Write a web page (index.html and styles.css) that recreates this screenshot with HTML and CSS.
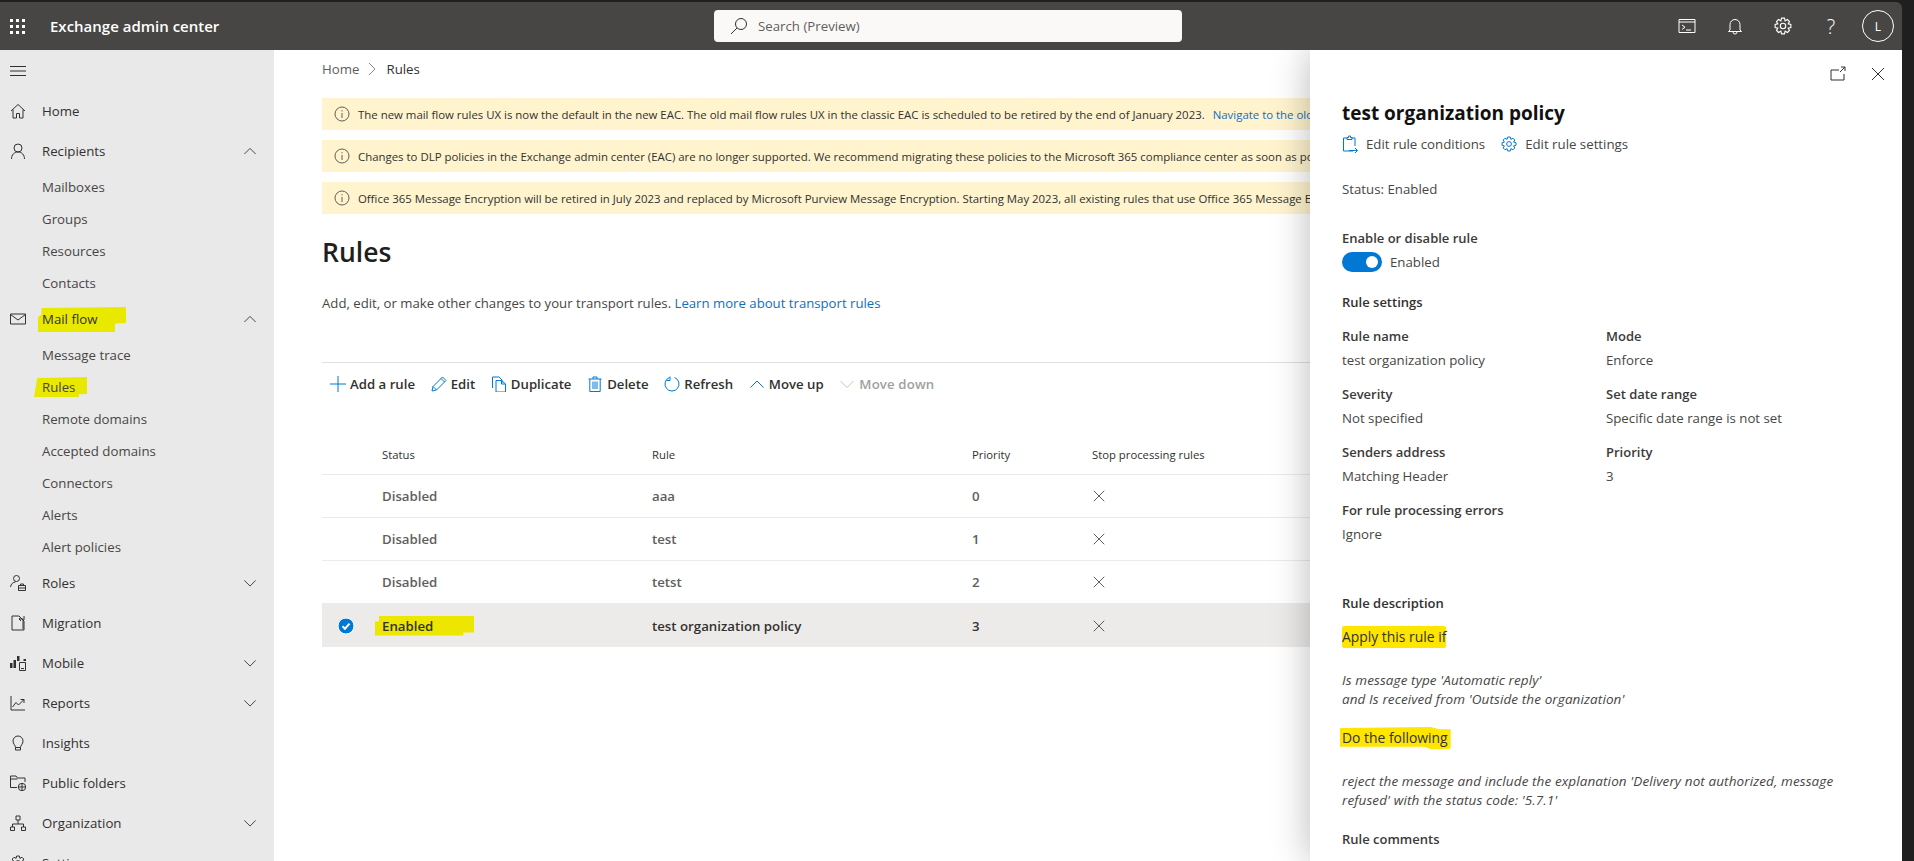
FILE: index.html
```html
<!DOCTYPE html>
<html lang="en">
<head>
<meta charset="utf-8">
<title>Rules - Exchange admin center</title>
<link rel="stylesheet" href="styles.css">
</head>
<body>
<svg class="sprite" aria-hidden="true">
  <symbol id="i-gear" viewBox="0 0 16 16"><path d="M6.7 1h2.6l.6 2.4 2.06-1.17 1.81 1.81L12.6 6.1l2.4.6v2.6l-2.4.6 1.17 2.06-1.81 1.81L9.9 12.6l-.6 2.4H6.7l-.6-2.4-2.06 1.17-1.81-1.81L3.4 9.9 1 9.3V6.7l2.4-.6-1.17-2.06 1.81-1.81L6.1 3.4z"/><circle cx="8" cy="8" r="2.4"/></symbol>
  <symbol id="i-up" viewBox="0 0 16 16"><path d="M1.5 11.5 8 5l6.5 6.5"/></symbol>
  <symbol id="i-down" viewBox="0 0 16 16"><path d="M1.5 5 8 11.5 14.5 5"/></symbol>
  <symbol id="i-info" viewBox="0 0 16 16"><circle cx="8" cy="8" r="7"/><path d="M8 7v5M8 4.2v1.2"/></symbol>
  <symbol id="i-x" viewBox="0 0 16 16"><path d="M2 2l12 12M14 2 2 14"/></symbol>
</svg>

<div class="app">
  <header class="topbar">
    <svg class="waffle" viewBox="0 0 15 15"><path d="M0 0h3v3H0zM6 0h3v3H6zM12 0h3v3h-3zM0 6h3v3H0zM6 6h3v3H6zM12 6h3v3h-3zM0 12h3v3H0zM6 12h3v3H6zM12 12h3v3h-3z"/></svg>
    <div class="brand">Exchange admin center</div>
    <div class="search">
      <svg class="ico search-ico" viewBox="0 0 18 18"><circle cx="11" cy="7" r="5.5"/><path d="M7 11 1 17"/></svg>
      <span>Search (Preview)</span>
    </div>
    <div class="top-actions">
      <svg class="ico top-ico" viewBox="0 0 18 18"><path d="M1 2.5h16v13H1zM1 5h16M4 8l3 2.2L4 12.400M8 13h5"/></svg>
      <svg class="ico top-ico" viewBox="0 0 18 18"><path d="M4 13V7.500a5 5 0 0 1 10 0V13l1.500 1.500h-13zM7 15a2 2 0 0 0 4 0"/></svg>
      <svg class="ico top-ico"><use href="#i-gear"/></svg>
      <span class="help">?</span>
      <span class="avatar">L</span>
    </div>
  </header>

  <div class="body">
    <nav class="side">
      <div class="nav-toggle">
        <svg class="ico nav-ico" viewBox="0 0 16 16"><path d="M0 3.500h16M0 8h16M0 12.500h16"/></svg>
      </div>
      <a class="nav-item">
        <svg class="ico nav-ico" viewBox="0 0 16 16"><path d="M1 8 8 1.500 15 8M3 6.500V15h3.500v-4.500h3V15H13V6.500"/></svg>
        <span>Home</span>
      </a>
      <a class="nav-item">
        <svg class="ico nav-ico" viewBox="0 0 16 16"><circle cx="8" cy="5" r="4"/><path d="M1.500 16c0-4 2.500-7 6.500-7s6.500 3 6.500 7"/></svg>
        <span>Recipients</span>
        <svg class="ico chev"><use href="#i-up"/></svg>
      </a>
      <a class="nav-sub">Mailboxes</a>
      <a class="nav-sub">Groups</a>
      <a class="nav-sub">Resources</a>
      <a class="nav-sub">Contacts</a>
      <a class="nav-item">
        <svg class="ico nav-ico" viewBox="0 0 16 16"><path d="M.5 3h15v10H.500zM.5 3.500 8 9l7.500-5.500"/></svg>
        <span class="mark mark-mail">Mail flow</span>
        <svg class="ico chev"><use href="#i-up"/></svg>
      </a>
      <a class="nav-sub">Message trace</a>
      <a class="nav-sub"><span class="mark mark-rules">Rules</span></a>
      <a class="nav-sub">Remote domains</a>
      <a class="nav-sub">Accepted domains</a>
      <a class="nav-sub">Connectors</a>
      <a class="nav-sub">Alerts</a>
      <a class="nav-sub">Alert policies</a>
      <a class="nav-item">
        <svg class="ico nav-ico" viewBox="0 0 16 16"><circle cx="6.500" cy="3.500" r="3"/><path d="M.5 12c.5-3 2.500-5 5-5M8.500 10.500h7v5h-7zM10.500 10.500V9h3v1.500M8.500 13h7"/></svg>
        <span>Roles</span>
        <svg class="ico chev"><use href="#i-down"/></svg>
      </a>
      <a class="nav-item">
        <svg class="ico nav-ico" viewBox="0 0 16 16"><path d="M9 1H2v14h12V6M9 1l5 5M14 1v4M13 4H9M11 2 9 4l2 2M13 4v10"/></svg>
        <span>Migration</span>
      </a>
      <a class="nav-item">
        <svg class="ico nav-ico" viewBox="0 0 16 16"><path class="solid" d="M0 8h2.500v5H0zM3.500 5h2.500v8H3.500zM7 1h2.500v5H7zM13.500 4H16v2h-2.500z"/><path d="M9.500 7.500h6v8h-6zM11 13.500h3"/></svg>
        <span>Mobile</span>
        <svg class="ico chev"><use href="#i-down"/></svg>
      </a>
      <a class="nav-item">
        <svg class="ico nav-ico" viewBox="0 0 16 16"><path d="M1 1v14h14M2.500 12 6 7.500l2.500 2.500L14 4.500M10.500 4.500H14V8"/></svg>
        <span>Reports</span>
        <svg class="ico chev"><use href="#i-down"/></svg>
      </a>
      <a class="nav-item">
        <svg class="ico nav-ico" viewBox="0 0 16 16"><path d="M5.500 12.500c0-2-2.500-3.500-2.500-6.500a5 5 0 0 1 10 0c0 3-2.500 4.500-2.500 6.500zM5.500 12.500V15h5v-2.500"/></svg>
        <span>Insights</span>
      </a>
      <a class="nav-item">
        <svg class="ico nav-ico" viewBox="0 0 16 16"><path d="M7 12.500H.5V1H6l1.500 2h7.500v4M.5 4h7"/><circle cx="12" cy="12" r="3.700"/><path d="M8.300 12h7.400M12 8.300v7.400"/></svg>
        <span>Public folders</span>
      </a>
      <a class="nav-item">
        <svg class="ico nav-ico" viewBox="0 0 16 16"><path d="M6 1h4v4H6zM8 5v4M2.500 12V9h11v3M.5 12h4v3.500h-4zM11.500 12h4v3.500h-4z"/></svg>
        <span>Organization</span>
        <svg class="ico chev"><use href="#i-down"/></svg>
      </a>
      <a class="nav-item">
        <svg class="ico nav-ico"><use href="#i-gear"/></svg>
        <span>Settings</span>
      </a>
    </nav>

    <main class="main">
      <div class="crumbs">
        <span class="crumb-home">Home</span>
        <svg class="ico crumb-sep" viewBox="0 0 8 14"><path d="M1 1l6 6-6 6"/></svg>
        <span class="crumb-cur">Rules</span>
      </div>

      <div class="banner">
        <svg class="ico banner-ico"><use href="#i-info"/></svg>
        <span class="banner-text">The new mail flow rules UX is now the default in the new EAC. The old mail flow rules UX in the classic EAC is scheduled to be retired by the end of January 2023.<a class="link banner-link">Navigate to the old</a></span>
      </div>
      <div class="banner">
        <svg class="ico banner-ico"><use href="#i-info"/></svg>
        <span class="banner-text">Changes to DLP policies in the Exchange admin center (EAC) are no longer supported. We recommend migrating these policies to the Microsoft 365 compliance center as soon as possible.</span>
      </div>
      <div class="banner">
        <svg class="ico banner-ico"><use href="#i-info"/></svg>
        <span class="banner-text">Office 365 Message Encryption will be retired in July 2023 and replaced by Microsoft Purview Message Encryption. Starting May 2023, all existing rules that use Office 365 Message Encryption</span>
      </div>

      <h1 class="page-title">Rules</h1>
      <p class="page-sub">Add, edit, or make other changes to your transport rules. <a class="link">Learn more about transport rules</a></p>

      <div class="toolbar">
        <button class="tool tool-add">
          <svg class="ico tool-ico" viewBox="0 0 16 16"><path d="M8 0v16M0 8h16"/></svg>Add a rule
        </button>
        <button class="tool">
          <svg class="ico tool-ico" viewBox="0 0 16 16"><path d="M1 15l1-4.500L11.500 1 15 4.500 5.500 14zM2 10.500 5.500 14M10 2.500 13.500 6"/></svg>Edit
        </button>
        <button class="tool">
          <svg class="ico tool-ico" viewBox="0 0 16 16"><path d="M1.500 12V1H8l3 3v3M5 4.500h5.500l4 3.500v8H5zM10.500 4.500V8h4"/></svg>Duplicate
        </button>
        <button class="tool">
          <svg class="ico tool-ico" viewBox="0 0 16 16"><path d="M1.500 3h13M6 3V1h4v2M2.800 3v12.500h10.400V3M6 5.500v7.500M8 5.500v7.500M10 5.500v7.500"/></svg>Delete
        </button>
        <button class="tool">
          <svg class="ico tool-ico" viewBox="0 0 16 16"><path d="M5.500 1.500a7 7 0 1 0 5 0M6 .5v4H2.500"/></svg>Refresh
        </button>
        <button class="tool">
          <svg class="ico tool-ico"><use href="#i-up"/></svg>Move up
        </button>
        <button class="tool tool-off">
          <svg class="ico tool-ico"><use href="#i-down"/></svg>Move down
        </button>
      </div>

      <div class="grid-table">
        <div class="tr th">
          <span></span><span>Status</span><span>Rule</span><span>Priority</span><span>Stop processing rules</span>
        </div>
        <div class="tr">
          <span></span><span>Disabled</span><span>aaa</span><span>0</span><svg class="ico cross"><use href="#i-x"/></svg>
        </div>
        <div class="tr">
          <span></span><span>Disabled</span><span>test</span><span>1</span><svg class="ico cross"><use href="#i-x"/></svg>
        </div>
        <div class="tr">
          <span></span><span>Disabled</span><span>tetst</span><span>2</span><svg class="ico cross"><use href="#i-x"/></svg>
        </div>
        <div class="tr tr-selected">
          <svg class="check" viewBox="0 0 18 18"><circle cx="9" cy="9" r="8"/><path d="M5.500 9.200 8 11.700l4.500-5"/></svg>
          <span><span class="mark mark-enabled">Enabled</span></span><span>test organization policy</span><span>3</span><svg class="ico cross"><use href="#i-x"/></svg>
        </div>
      </div>

      <aside class="panel">
        <div class="panel-top">
          <svg class="ico panel-ctl" viewBox="0 0 16 16"><path d="M9 4H1v10h13V8M10 6l5-5M11 1h4v4"/></svg>
          <svg class="ico panel-ctl"><use href="#i-x"/></svg>
        </div>
        <h2 class="panel-title">test organization policy</h2>
        <div class="panel-links">
          <a class="panel-link">
            <svg class="ico panel-link-ico" viewBox="0 0 16 18"><path d="M11 16H1.500V3H5M10 3h3v8M5 4.500V2.500h1.500V1h2v1.500H10v2zM7 15.500h8M13 13l2.500 2.500L13 18"/></svg>
            Edit rule conditions
          </a>
          <a class="panel-link">
            <svg class="ico panel-link-ico"><use href="#i-gear"/></svg>
            Edit rule settings
          </a>
        </div>
        <p class="status">Status: Enabled</p>
        <h3 class="label enable-label">Enable or disable rule</h3>
        <div class="toggle-row">
          <span class="toggle"></span>
          <span>Enabled</span>
        </div>
        <h3 class="label section-head">Rule settings</h3>
        <dl class="fields">
          <div><dt class="label">Rule name</dt><dd>test organization policy</dd></div>
          <div><dt class="label">Mode</dt><dd>Enforce</dd></div>
          <div><dt class="label">Severity</dt><dd>Not specified</dd></div>
          <div><dt class="label">Set date range</dt><dd>Specific date range is not set</dd></div>
          <div><dt class="label">Senders address</dt><dd>Matching Header</dd></div>
          <div><dt class="label">Priority</dt><dd>3</dd></div>
          <div><dt class="label">For rule processing errors</dt><dd>Ignore</dd></div>
        </dl>
        <h3 class="label desc-head">Rule description</h3>
        <div class="cond"><span class="mark mark-apply">Apply this rule if</span></div>
        <p class="desc">Is message type 'Automatic reply'<br>and Is received from 'Outside the organization'</p>
        <div class="cond cond-do"><span class="mark mark-do">Do the following</span></div>
        <p class="desc">reject the message and include the explanation 'Delivery not authorized, message refused' with the status code: '5.7.1'</p>
        <h3 class="label comments-head">Rule comments</h3>
      </aside>
    </main>
  </div>
</div>
</body>
</html>
```

FILE: styles.css
```css
* { box-sizing: border-box; }
html, body { margin: 0; height: 100%; overflow: hidden; background: #1f1f1f; }
body {
  font-family: "Open Sans", "Noto Sans", sans-serif;
  font-size: 13.250px;
  color: #323130;
}
.sprite { display: none; }
.ico { fill: none; stroke: currentColor; stroke-width: 1; flex: none; display: block; }
.ico .solid { fill: currentColor; stroke: none; }
h1, h2, h3, p, dl, dd { margin: 0; font-weight: inherit; font-size: inherit; }

.app { width: 1902px; height: 861px; padding-top: 2px; display: flex; flex-direction: column; }

/* top bar */
.topbar {
  height: 48px; flex: none; background: #484644; color: #fff; border-top-right-radius: 6px;
  display: flex; align-items: center; padding-left: 10px; position: relative;
}
.waffle { width: 15px; height: 15px; fill: #fff; flex: none; }
.brand { margin-left: 25px; font-size: 15px; font-weight: 600; width: 664px; }
.search {
  width: 468px; height: 32px; background: #faf9f8; border-radius: 4px; color: #605e5c;
  display: flex; align-items: center; padding-left: 16px; gap: 10px;
}
.search-ico { width: 18px; height: 18px; color: #323130; }
.top-actions { margin-left: auto; display: flex; align-items: center; padding-right: 8px; }
.top-ico { width: 18px; height: 18px; margin-right: 30px; }
.help { width: 18px; text-align: center; font-size: 20px; font-weight: 300; margin-right: 22px; }
.avatar {
  width: 32px; height: 32px; border: 1px solid #fff; border-radius: 50%;
  display: flex; align-items: center; justify-content: center; font-size: 12px;
}

.body { flex: 1; display: flex; min-height: 0; background: #fff; }

/* sidebar */
.side { width: 274px; flex: none; background: #e9e9e9; overflow: hidden; color: #323130; }
.nav-toggle { height: 41px; display: flex; align-items: center; padding-left: 10px; }
.nav-item { height: 40px; display: flex; align-items: center; padding-left: 10px; position: relative; }
.nav-ico { width: 16px; height: 16px; margin-right: 16px; }
.chev { width: 14px; height: 14px; margin-left: auto; margin-right: 17px; }
.nav-sub { height: 32px; display: flex; align-items: center; padding-left: 42px; color: #484644; }

/* marker highlight: hand-drawn strokes with uneven edges */
.mark { position: relative; z-index: 0; display: inline-block; }
.mark::before { content: ""; position: absolute; z-index: -1; background: #e9e900; }
.mark-mail::before {
  left: -4px; right: -29px; top: -3px; bottom: -4px;
  clip-path: polygon(4% 4%, 100% 0, 100% 64%, 87% 66%, 87% 100%, 0 100%, 0 40%, 4% 30%);
}
.mark-rules::before {
  left: -8px; right: -12px; top: -1px; bottom: -1px;
  clip-path: polygon(6% 5%, 100% 0, 100% 85%, 84% 86%, 84% 100%, 0 100%);
}
.mark-enabled::before {
  left: -7px; right: -41px; top: -1px; bottom: -1px; background: #ece600;
  clip-path: polygon(4% 0, 100% 0, 100% 85%, 89% 85%, 89% 100%, 0 100%, 0 30%, 4% 30%);
}
.mark-apply::before, .mark-do::before { background: #ffe600; top: -1px; bottom: -1px; border-radius: 2px; }
.mark-apply::before { left: 0; right: 0; }
.mark-do::before { left: -2px; right: -3px; clip-path: polygon(0 5%, 82% 0, 90% 10%, 100% 10%, 100% 100%, 82% 100%, 76% 90%, 0 90%); }

/* main */
.main { flex: 1; position: relative; padding: 9px 592px 0 48px; min-width: 0; overflow: hidden; }
.crumbs { height: 20px; display: flex; align-items: center; margin-bottom: 19px; }
.crumb-home { color: #605e5c; }
.crumb-sep { width: 8px; height: 14px; margin: 0 10px 0 9px; color: #8a8886; }
.banner {
  height: 32px; background: #fff4ce; margin-bottom: 10px; display: flex; align-items: center;
  padding-left: 12px; font-size: 11.420px; white-space: nowrap; overflow: hidden;
}
.banner-ico { width: 16px; height: 16px; margin-right: 8px; color: #605e5c; }
.link { color: #106ebe; }
.banner-link { margin-left: 8px; }
.page-title { font-size: 26.500px; font-weight: 600; line-height: 40px; margin-top: 18px; color: #201f1e; }
.page-sub { font-size: 13.180px; line-height: 20px; margin-top: 21px; color: #484644; }

.toolbar {
  margin-top: 49px; height: 43px; border-top: 1px solid #e1dfdd; display: flex; align-items: center;
  padding-left: 8px; gap: 15.700px;
}
.tool {
  all: unset; display: flex; align-items: center; gap: 4px; color: #323130; font-weight: 600; white-space: nowrap; cursor: default;
  font-size: 13.200px;
}
.tool-ico { width: 16px; height: 16px; color: #0078d4; }
.tool-off { color: #a19f9d; letter-spacing: .15px; }
.tool-off .tool-ico { color: #c8c6c4; }

.grid-table { margin-top: 29px; }
.tr {
  display: grid; grid-template-columns: 60px 270px 320px 120px 1fr; align-items: center;
  height: 43px; border-bottom: 1px solid #edebe9; font-weight: 600; color: #605e5c;
}
.th { height: 41px; font-size: 11.300px; font-weight: 400; color: #323130; border-bottom-width: 1px; }
.tr-selected { background: #edebe9; color: #323130; border-bottom: 0; }
.cross { width: 14px; height: 14px; margin-left: 0; color: #484644; }
.check { width: 18px; height: 18px; margin-left: 15px; }
.check circle { fill: #0078d4; stroke: #fff; stroke-width: 1; }
.check path { fill: none; stroke: #fff; stroke-width: 2; }

/* details panel */
.panel {
  position: absolute; top: 0; left: 1036px; width: 592px; height: 100%; background: #fff;
  padding: 12px 0 0 32px; box-shadow: 0 0 36px rgba(0, 0, 0, .28); color: #484644;
}
.panel-top { height: 24px; display: flex; align-items: center; justify-content: flex-end; gap: 24px; padding-right: 16px; color: #323130; }
.panel-ctl { width: 16px; height: 16px; }
.panel-title { font-size: 19px; font-weight: 700; line-height: 28px; margin-top: 13px; color: #111; }
.panel-links { display: flex; height: 24px; margin-top: 5px; gap: 16px; color: #484644; }
.panel-link { display: flex; align-items: center; gap: 8px; }
.panel-link-ico { width: 16px; height: 18px; color: #0078d4; }
.status { line-height: 20px; margin-top: 23px; }
.label { font-size: 13px; font-weight: 600; line-height: 20px; color: #3b3a39; }
.enable-label { margin-top: 29px; }
.toggle-row { height: 20px; display: flex; align-items: center; gap: 8px; margin-top: 4px; }
.toggle { width: 40px; height: 20px; border-radius: 10px; background: #0078d4; position: relative; flex: none; }
.toggle::after { content: ""; position: absolute; width: 12px; height: 12px; border-radius: 50%; background: #fff; right: 4px; top: 4px; }
.section-head { margin-top: 20px; color: #323130; }
.fields { display: grid; grid-template-columns: 264px 1fr; row-gap: 14px; margin-top: 14px; }
.fields dt { margin-bottom: 4px; }
.fields dd { line-height: 20px; }
.desc-head { margin-top: 49px; color: #323130; }
.cond { font-size: 13.900px; line-height: 20px; margin-top: 14px; color: #323130; }
.cond-do { margin-top: 19px; }
.desc { font-size: 13.500px; letter-spacing: .1px; font-style: italic; line-height: 19px; margin-top: 24px; width: 500px; }
.comments-head { margin-top: 19px; }
```
